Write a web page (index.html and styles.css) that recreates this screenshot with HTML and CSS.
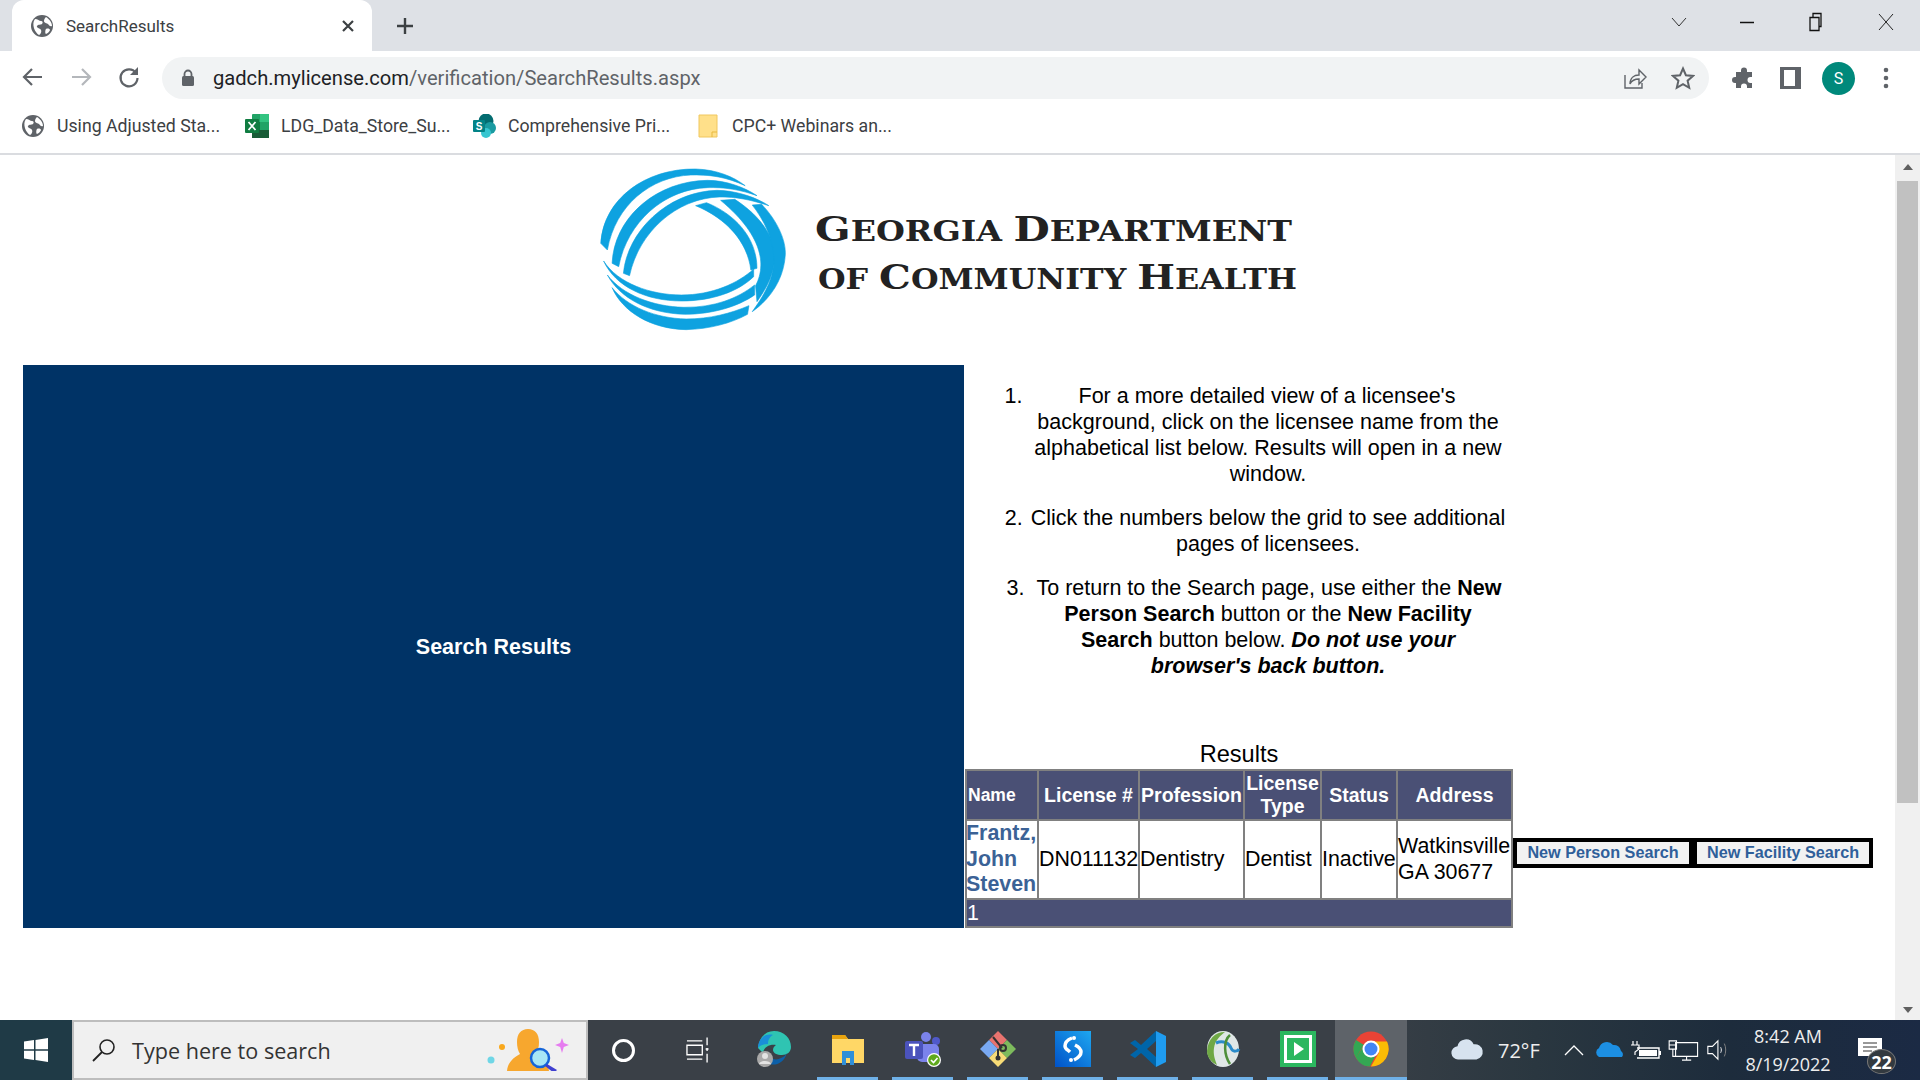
FILE: index.html
```html
<!DOCTYPE html>
<html lang="en">
<head>
<meta charset="utf-8">
<title>SearchResults</title>
<link rel="stylesheet" href="styles.css">
</head>
<body>
<div class="screen">
  <header class="tabstrip">
    <div class="tab">
      <svg class="ico22" viewBox="0 0 22 22"><circle cx="11" cy="11" r="11" fill="#5f6368"/><path d="M4 4c3 0 4 2 6 2s2 2 1 3-4 0-5 2 3 2 4 4-1 5-2 5C4 18 0 9 4 4zM15 2c3 2 6 5 6 9-2 1-3-1-4-2s-4-1-4-3 1-3 2-4zM15 14c2-1 4 0 4 1s-3 4-4 4-1-4 0-5z" fill="#fff"/></svg>
      <span class="tab-title">SearchResults</span>
      <svg class="tab-close" viewBox="0 0 14 14"><path d="M2 2l10 10M12 2L2 12" stroke="#3c4043" stroke-width="2.2" fill="none"/></svg>
    </div>
    <svg class="newtab" viewBox="0 0 20 20"><path d="M10 2v16M2 10h16" stroke="#3c4043" stroke-width="2.4" fill="none"/></svg>
    <div class="winctl">
      <svg class="chev" viewBox="0 0 16 10"><path d="M1 1l7 8 7-8" stroke="#333" stroke-width="1" fill="none"/></svg>
      <svg class="wbtn" viewBox="0 0 20 20"><path d="M3 10.500h14" stroke="#111" stroke-width="1.500"/></svg>
      <svg class="wbtn" viewBox="0 0 20 20"><path d="M5 5.500h9v13H5zM8 5.500V1.500h8v13h-2" stroke="#111" stroke-width="1.300" fill="none"/></svg>
      <svg class="wbtn" viewBox="0 0 20 20"><path d="M3 2l14 16M17 2L3 18" stroke="#222" stroke-width="1" fill="none"/></svg>
    </div>
  </header>

  <nav class="toolbar">
    <svg class="navbtn" viewBox="0 0 24 24"><path d="M21 12H4M11 4l-8 8 8 8" stroke="#5f6368" stroke-width="2.200" fill="none"/></svg>
    <svg class="navbtn" viewBox="0 0 24 24"><path d="M3 12h17M13 4l8 8-8 8" stroke="#b4b7bb" stroke-width="2.200" fill="none"/></svg>
    <svg class="navbtn" viewBox="0 0 24 24"><path d="M19 8a8.500 8.500 0 1 0 1.500 5" stroke="#5f6368" stroke-width="2.200" fill="none"/><path d="M21 2v8h-8z" fill="#5f6368"/></svg>
    <div class="omnibox">
      <svg class="lock" viewBox="0 0 14 18"><path d="M3.500 8V5a3.500 3.500 0 0 1 7 0v3" stroke="#5f6368" stroke-width="1.800" fill="none"/><rect x="1" y="7" width="12" height="10" rx="1.500" fill="#5f6368"/></svg>
      <span class="url"><span class="url-host">gadch.mylicense.com</span>/verification/SearchResults.aspx</span>
      <svg class="omni-share" viewBox="0 0 24 24"><path d="M2 9v13h17v-5M7 18c0-6 4-9 9-9V4l7 7-7 7v-5c-4 0-7 1-9 5z" stroke="#5f6368" stroke-width="1.400" fill="none"/></svg>
      <svg class="omni-star" viewBox="0 0 24 24"><path d="M12 2.500l2.900 6.700 7.100.7-5.400 4.800 1.600 7.100L12 18.100l-6.200 3.700 1.600-7.100L2 9.900l7.100-.7z" stroke="#5f6368" stroke-width="2" fill="none"/></svg>
    </div>
    <div class="toolbar-right">
      <svg class="tool" viewBox="0 0 24 24"><path d="M9 4.500a3 3 0 0 1 6 0V6h5v5h-1.500a3 3 0 0 0 0 6H20v5h-5v-1.500a3 3 0 0 0-6 0V22H4v-5H3a3 3 0 0 1 0-6h1V6h5z" fill="#5f6368"/></svg>
      <svg class="tool panel-ico" viewBox="0 0 21 22"><path d="M0 0h21v22H0zM4 3v16h11V3z" fill="#5f6368" fill-rule="evenodd"/></svg>
      <span class="avatar">S</span>
      <svg class="tool dots" viewBox="0 0 6 24"><circle cx="3" cy="4" r="2.300" fill="#5f6368"/><circle cx="3" cy="12" r="2.300" fill="#5f6368"/><circle cx="3" cy="20" r="2.300" fill="#5f6368"/></svg>
    </div>
  </nav>

  <div class="bookmarks">
    <a class="bm bm1">
      <svg class="ico22" viewBox="0 0 22 22"><circle cx="11" cy="11" r="11" fill="#5f6368"/><path d="M4 4c3 0 4 2 6 2s2 2 1 3-4 0-5 2 3 2 4 4-1 5-2 5C4 18 0 9 4 4zM15 2c3 2 6 5 6 9-2 1-3-1-4-2s-4-1-4-3 1-3 2-4zM15 14c2-1 4 0 4 1s-3 4-4 4-1-4 0-5z" fill="#fff"/></svg>
      <span>Using Adjusted Sta...</span>
    </a>
    <a class="bm bm2">
      <svg class="ico24" viewBox="0 0 24 24"><rect x="7" y="0" width="17" height="24" rx="1" fill="#21a366"/><rect x="15" y="0" width="9" height="8" fill="#33c481"/><rect x="7" y="16" width="17" height="8" fill="#185c37"/><rect x="7" y="8" width="8" height="8" fill="#107c41"/><rect x="0" y="5" width="14" height="14" rx="1" fill="#107c41"/><path d="M3.500 8l7 8M10.500 8l-7 8" stroke="#fff" stroke-width="1.800"/></svg>
      <span>LDG_Data_Store_Su...</span>
    </a>
    <a class="bm bm3">
      <svg class="ico24" viewBox="0 0 24 24"><circle cx="13" cy="7" r="7.500" fill="#036c70"/><circle cx="17" cy="14" r="6" fill="#1a9ba1"/><circle cx="13" cy="19" r="5" fill="#37c6d0"/><rect x="0" y="6" width="12" height="12" rx="1" fill="#038387"/><text class="sp-s" x="6" y="16">S</text></svg>
      <span>Comprehensive Pri...</span>
    </a>
    <a class="bm bm4">
      <svg class="ico20" viewBox="0 0 20 24"><path d="M1 1h11l7 0v22H1z" fill="#ffe08a" stroke="#f0c75e"/><path d="M14 23v-5h5" stroke="#e8b93f" fill="none"/></svg>
      <span>CPC+ Webinars an...</span>
    </a>
  </div>

  <div class="viewport">
    <main class="page">
      <div class="logo-row">
        <svg class="logo" viewBox="0 0 735 210">
          <g class="ring" transform="scale(0.4719 0.3333)">
            <path d="M44 265C50 130 140 40 245 42C290 44 325 65 350 92C310 65 270 58 235 60C150 65 75 150 58 285Z"/>
            <path d="M68 325C72 190 160 78 270 76C310 76 350 98 375 122C340 104 305 96 270 98C180 102 100 200 82 335Z"/>
            <path d="M92 355C100 230 185 110 290 106C330 106 375 128 400 152C365 136 330 124 295 126C205 130 125 230 105 362Z"/>
            <path d="M245 152L268 143C325 175 375 245 375 340L362 345C355 260 310 190 245 152Z"/>
            <path d="M298 136L328 133C385 185 418 255 412 320C408 365 395 400 375 440L372 392C392 340 395 250 298 136Z"/>
            <path d="M365 150L385 148C420 200 437 260 435 300C432 370 405 430 365 470C385 430 415 370 410 300C408 250 390 195 365 150Z"/>
            <path d="M50 318C80 385 150 420 215 420C280 420 335 385 368 342L368 365C335 410 280 438 215 438C140 438 75 395 50 318Z"/>
            <path d="M58 360C90 420 155 455 220 457C285 458 335 430 370 390L370 420C335 455 280 478 222 478C145 475 85 430 58 360Z"/>
            <path d="M68 398C100 455 160 490 225 492C275 492 320 475 358 452L355 478C320 505 275 522 225 524C150 522 90 470 68 398Z"/>
          </g>
          <text class="logo-text" x="235" y="86" textLength="477" lengthAdjust="spacingAndGlyphs"><tspan class="lc">G</tspan>EORGIA <tspan class="lc">D</tspan>EPARTMENT</text>
          <text class="logo-text" x="238" y="134" textLength="479" lengthAdjust="spacingAndGlyphs">OF <tspan class="lc">C</tspan>OMMUNITY <tspan class="lc">H</tspan>EALTH</text>
        </svg>
      </div>

      <div class="content">
        <section class="panel">Search Results</section>
        <section class="middle">
          <div class="steps">
            <p class="step step-first"><span class="num num-first">1.</span>For a more detailed view of a licensee's background, click on the licensee name from the alphabetical list below. Results will open in a new window.</p>
            <p class="step"><span class="num">2.</span>Click the numbers below the grid to see additional pages of licensees.</p>
            <p class="step step-third"><span class="num num-third">3.</span>To return to the Search page, use either the <b>New Person Search</b> button or the <b>New Facility Search</b> button below. <b><i>Do not use your browser's back button.</i></b></p>
          </div>
          <table class="grid">
            <caption>Results</caption>
            <thead>
              <tr class="head">
                <th class="c1 small">Name</th>
                <th class="c2">License #</th>
                <th class="c3">Profession</th>
                <th class="c4">License Type</th>
                <th class="c5">Status</th>
                <th class="c6">Address</th>
              </tr>
            </thead>
            <tbody>
              <tr class="row">
                <td><a class="name" href="#">Frantz, John Steven</a></td>
                <td>DN011132</td>
                <td>Dentistry</td>
                <td>Dentist</td>
                <td>Inactive</td>
                <td>Watkinsville<br>GA 30677</td>
              </tr>
              <tr class="pager"><td colspan="6">1</td></tr>
            </tbody>
          </table>
        </section>
        <div class="actions">
          <button class="btn btn1">New Person Search</button>
          <button class="btn btn2">New Facility Search</button>
        </div>
      </div>
    </main>
    <aside class="scrollbar">
      <span class="arrow-up"></span>
      <span class="thumb"></span>
      <span class="arrow-down"></span>
    </aside>
  </div>

  <footer class="taskbar">
    <div class="start">
      <svg class="winlogo" viewBox="0 0 24 24"><path d="M0 3.500l10-1.400v9.200H0zM11.500 1.900L24 0v11.300H11.500zM0 12.700h10v9.200L0 20.500zM11.500 12.700H24V24l-12.500-1.900z" fill="#fff"/></svg>
    </div>
    <div class="search">
      <svg class="mag" viewBox="0 0 24 24"><circle cx="15" cy="9" r="7" stroke="#222" stroke-width="1.600" fill="none"/><path d="M10 14L1 23" stroke="#222" stroke-width="1.800"/></svg>
      <span class="search-text">Type here to search</span>
      <svg class="searchart" viewBox="0 0 84 42">
        <circle cx="4" cy="31" r="3.500" fill="#6fd6e6"/><circle cx="15" cy="18" r="3" fill="#f9a81c"/>
        <path d="M75 9l1.800 5 5.200 2-5.200 2-1.800 6-1.800-6-5.200-2 5.200-2z" fill="#e67cf0"/>
        <path d="M20 42c1-10 8-14 13-17-2-3-3-7-3-12 0-8 4-13 11-13s11 5 11 13c0 5-1 9-3 12 6 3 12 7 13 17z" fill="#f7a72e"/>
        <circle cx="53" cy="29" r="9" fill="#a8e6f5" stroke="#1565d8" stroke-width="2.500"/>
        <path d="M60 35l10 6-3 3-9-7z" fill="#3f3fcf"/>
      </svg>
    </div>
    <div class="slot slot-cortana"><span class="cortana"></span></div>
    <div class="slot slot-task">
      <svg class="taskview" viewBox="0 0 24 28"><path d="M1 4.500h16M1 23.500h16M1 9h16v10H1zM22 1v8M22 12v3M22 18v9M20.500 13h3" stroke="#fff" stroke-width="1.400" fill="none"/></svg>
    </div>
    <div class="slot app noline">
      <svg class="appicon" viewBox="0 0 36 36"><path d="M3 17C4 7 10 0 19 0c10 0 17 7 17 16 0 5-4 8-9 8-5 0-9-2-9-5 0-3 2-4 3-5-5-1-12 1-13 8z" fill="#2fc4b2"/><path d="M3 17C3 8 10 2 18 4c-4 2-5 6-5 9C9 13 5 14 3 17z" fill="#1a8fd8"/><path d="M12 22c2 6 9 8 14 5 3-1 5-3 6-5-3 10-11 13-18 11z" fill="#0c5fa8"/><circle cx="10" cy="28" r="8" fill="#a9a9a9"/><circle cx="10" cy="25" r="3" fill="#e3e3e3"/><path d="M4 33c1-4 11-4 12 0z" fill="#e3e3e3"/></svg>
    </div>
    <div class="slot app">
      <svg class="appicon" viewBox="0 0 36 36"><path d="M2 4h13l3 4h16v24H2z" fill="#ffd766"/><path d="M2 4h13l3 4H2z" fill="#e8a30e"/><path d="M12 34V20h12v14h-4v-7h-4v7z" fill="#2f8fd8"/></svg>
    </div>
    <div class="slot app">
      <svg class="appicon" viewBox="0 0 36 36"><circle cx="21" cy="6" r="5" fill="#7b83eb"/><circle cx="31" cy="10" r="4" fill="#5059c9"/><rect x="12" y="13" width="22" height="18" rx="5" fill="#7b83eb"/><rect x="0" y="10" width="18" height="18" rx="2" fill="#4b53bc"/><path d="M4 14h10M9 14v11" stroke="#fff" stroke-width="2.400"/><circle cx="29" cy="29" r="7" fill="#fff"/><circle cx="29" cy="29" r="5.800" fill="#5fa91d"/><path d="M26 29l2.500 2.500 4-4.500" stroke="#fff" stroke-width="1.600" fill="none"/></svg>
    </div>
    <div class="slot app">
      <svg class="appicon" viewBox="0 0 36 36"><path d="M18 0l9 9-9 9-9-9z" fill="#e8736f"/><path d="M27 9l9 9-9 9-9-9z" fill="#7dbb5d"/><path d="M9 9l9 9-9 9-9-9z" fill="#79a9f2"/><path d="M18 18l9 9-9 9-9-9z" fill="#f7dc77"/><path d="M13 6l9 11M18 18v9" stroke="#333" stroke-width="2" fill="none"/><circle cx="18" cy="27" r="2.500" fill="#333"/><circle cx="23" cy="17" r="3" fill="none" stroke="#333" stroke-width="2"/></svg>
    </div>
    <div class="slot app">
      <svg class="appicon" viewBox="0 0 36 36"><defs><linearGradient id="sg" x1="0" y1="1" x2="1" y2="0"><stop offset="0" stop-color="#0052c8"/><stop offset="1" stop-color="#1ea7f0"/></linearGradient></defs><rect width="36" height="36" fill="url(#sg)"/><path d="M17 7c-5 2-7 5-7 8 0 3 3 4 5 6M20 14c4 2 6 4 6 7 0 3-3 6-7 8" stroke="#fff" stroke-width="3.500" fill="none"/><circle cx="19" cy="7" r="2" fill="#fff"/><circle cx="16" cy="29" r="2" fill="#fff"/></svg>
    </div>
    <div class="slot app vs">
      <svg class="appicon" viewBox="0 0 36 36"><path d="M26 0v36L11 22l-6 5-5-3 8-6-8-6 5-3 6 5z" fill="#0065a9"/><path d="M26 10v16l-9-8z" fill="#3a4047"/><path d="M26 0l10 5v26l-10 5z" fill="#1f9cf0"/></svg>
    </div>
    <div class="slot app">
      <svg class="appicon" viewBox="0 0 36 36"><ellipse cx="18" cy="18" rx="16" ry="18" fill="#dfe7e6"/><path d="M2 20C3 8 10 1 20 1c-4 3-10 8-11 16-1 6 1 12 3 17C6 31 2 26 2 20z" fill="#6fa845"/><path d="M11 12c7-3 13 0 15 5s7 3 8 1" stroke="#2a8bc9" stroke-width="3" fill="none"/><path d="M25 4c-7 6-6 20 0 29" stroke="#4d8f3a" stroke-width="2.500" fill="none"/></svg>
    </div>
    <div class="slot app">
      <svg class="appicon" viewBox="0 0 36 36"><rect width="36" height="36" fill="#2bb75f"/><rect x="4" y="4" width="28" height="28" fill="#fff"/><rect x="7" y="7" width="22" height="22" fill="#2bb75f"/><path d="M14 11l10 7-10 7z" fill="#fff"/></svg>
    </div>
    <div class="slot app active">
      <svg class="appicon" viewBox="0 0 36 36"><circle cx="18" cy="18" r="17.500" fill="#ea4335"/><path d="M3 27l8-14 7 5 8 0-9 17.500C11 35.500 6 32 3 27zM3 9a17.500 17.500 0 0 0 0 18l8-13z" fill="#34a853"/><path d="M18 10.500h16a17.500 17.500 0 0 1-16 25l8-14z" fill="#fbbc05"/><circle cx="18" cy="18" r="8.500" fill="#fff"/><circle cx="18" cy="18" r="6.500" fill="#4285f4"/></svg>
    </div>
    <div class="tray">
      <svg class="cloud" viewBox="0 0 36 24"><path d="M9 22a7 7 0 0 1-1-14 9 9 0 0 1 17-2 8 8 0 0 1 3 16z" fill="#d7e3ef"/></svg>
      <span class="temp">72°F</span>
      <svg class="t t-chev" viewBox="0 0 36 20"><path d="M9 15l9-9 9 9" stroke="#fff" stroke-width="1.300" fill="none"/></svg>
      <svg class="t" viewBox="0 0 36 20"><path d="M7 17a5 5 0 0 1 0-9 8 8 0 0 1 14-3 7 7 0 0 1 8 6 4 4 0 0 1 1 6z" fill="#1c8fe3"/></svg>
      <svg class="t" viewBox="0 0 36 20"><path d="M5 1v4M9 1v4M3 5h8v4l-4 3v3" stroke="#fff" stroke-width="1.200" fill="none"/><path d="M9 8h22v10H9" stroke="#fff" stroke-width="1.400" fill="none"/><rect x="11" y="10" width="18" height="6" fill="#fff"/><rect x="31" y="11" width="2" height="4" fill="#fff"/></svg>
      <svg class="t" viewBox="0 0 36 24"><path d="M11 4h24v15H11zM4 2h8v9H4zM4 6.500h8M8 11v8h10M23 19v4M18 23h10" stroke="#fff" stroke-width="1.200" fill="none"/></svg>
      <svg class="t t-vol" viewBox="0 0 24 24"><path d="M2 8h5l6-6v20l-6-6H2z" stroke="#fff" stroke-width="1.200" fill="none"/><path d="M16 9c1 2 1 4 0 6" stroke="#fff" fill="none"/><path d="M20 5c2 4 2 10 0 14" stroke="#888" fill="none"/></svg>
      <div class="clock"><span>8:42 AM</span><span>8/19/2022</span></div>
      <div class="notif">
        <svg class="note" viewBox="0 0 24 20"><path d="M0 0h24v18H0z" fill="#fff"/><path d="M5 5h14M5 9h14M5 13h9" stroke="#333"/></svg>
        <span class="badge">22</span>
      </div>
    </div>
  </footer>
</div>
</body>
</html>
```

FILE: styles.css
```css
* { box-sizing: border-box; }
html, body { margin: 0; height: 100%; overflow: hidden; background: #fff; }
.screen { width: 1920px; height: 1080px; display: flex; flex-direction: column; font-family: "Liberation Sans", Arial, sans-serif; }

/* tab strip */
.tabstrip { height: 51px; background: #dee1e6; display: flex; align-items: center; flex: none; }
.tab { margin-left: 12px; width: 360px; height: 51px; background: #fff; border-radius: 12px 12px 0 0; display: flex; align-items: center; padding-left: 19px; position: relative; align-self: flex-end; }
.ico22 { width: 22px; height: 22px; flex: none; }
.ico24 { width: 24px; height: 24px; flex: none; }
.ico20 { width: 20px; height: 24px; flex: none; }
.tab-title { margin-left: 13px; font: 17px Roboto, sans-serif; color: #3c4043; }
.tab-close { width: 14px; height: 14px; margin-left: auto; margin-right: 17px; }
.newtab { width: 20px; height: 20px; margin-left: 23px; }
.winctl { margin-left: auto; display: flex; align-items: center; }
.chev { width: 16px; height: 10px; margin-right: 50px; margin-top: -8px; }
.wbtn { width: 20px; height: 20px; margin-right: 48px; margin-top: -8px; }
.wbtn:nth-child(3) { margin-right: 51px; }
.wbtn:last-child { margin-right: 24px; }

/* toolbar */
.toolbar { height: 51px; background: #fff; display: flex; align-items: center; flex: none; padding-left: 21px; }
.navbtn { width: 24px; height: 24px; margin-right: 24px; flex: none; }
.navbtn:nth-child(3) { margin-right: 21px; }
.omnibox { width: 1547px; height: 42px; margin-top: 3px; background: #f1f3f4; border-radius: 21px; display: flex; align-items: center; padding-left: 19px; flex: none; }
.lock { width: 14px; height: 18px; flex: none; }
.url { margin-left: 18px; font: 20.15px Roboto, sans-serif; color: #5f6368; white-space: nowrap; }
.url-host { color: #202124; }
.omni-share { width: 24px; height: 24px; margin-left: auto; }
.omni-star { width: 24px; height: 24px; margin-left: 24px; margin-right: 14px; }
.toolbar-right { display: flex; align-items: center; margin-left: 23px; margin-top: 3px; }
.tool { width: 24px; height: 24px; flex: none; }
.tool.panel-ico { width: 21px; height: 22px; margin-left: 24px; }
.avatar { width: 33px; height: 33px; border-radius: 50%; background: #00897b; color: #fff; margin-left: 21px; display: flex; align-items: center; justify-content: center; font: 16px Roboto, sans-serif; }
.tool.dots { width: 6px; margin-left: 28px; }

/* bookmarks */
.bookmarks { height: 53px; flex: none; background: #fff; border-bottom: 2px solid #dadce0; display: flex; align-items: center; padding-left: 22px; padding-bottom: 3px; }
.bm { display: flex; align-items: center; font: 17.7px Roboto, sans-serif; color: #3c4043; white-space: nowrap; }
.bm1 { width: 223px; gap: 13px; }
.bm2 { width: 228px; gap: 12px; }
.bm3 { width: 225px; gap: 11px; }
.bm4 { gap: 14px; }
.sp-s { font: bold 10px "Liberation Sans", sans-serif; fill: #fff; text-anchor: middle; }

/* page */
.viewport { flex: 1; display: flex; min-height: 0; }
.page { flex: 1; min-width: 0; background: #fff; }
.scrollbar { width: 25px; background: #f0f0f0; display: flex; flex-direction: column; align-items: center; flex: none; position: relative; }
.arrow-up { width: 0; height: 0; border: 5px solid transparent; border-bottom: 6px solid #606060; border-top: 0; margin-top: 9px; }
.thumb { width: 21px; height: 622px; background: #c1c1c1; margin-top: 11px; }
.arrow-down { width: 0; height: 0; border: 5px solid transparent; border-top: 6px solid #606060; border-bottom: 0; margin-top: auto; margin-bottom: 7px; }

.logo-row { height: 210px; display: flex; justify-content: center; }
.logo { width: 735px; height: 210px; display: block; }
.ring path { fill: #0ea2e0; stroke: #0ea2e0; stroke-width: 1.5; }
.logo-text { font: bold 27px "DejaVu Serif", serif; fill: #222; }
.lc { font-size: 34px; }

.content { display: flex; padding-left: 23px; height: 563px; }
.panel { width: 941px; height: 563px; background: #003366; color: #fff; font-weight: bold; font-size: 21.5px; display: flex; align-items: center; justify-content: center; flex: none; padding-top: 2px; }
.middle { width: 549px; flex: none; display: flex; flex-direction: column; }
.steps { padding: 18px 6px 0 65px; height: 378px; }
.step { margin: 0 0 18px; text-align: center; font-size: 21.5px; line-height: 26px; text-indent: -26px; }
.step-first { text-indent: -76px; }
.step-third { text-indent: -28px; }
.num { display: inline-block; width: 26px; text-indent: 0; text-align: left; }
.num-first { width: 74px; }
.num-third { width: 30px; }

.grid { border-collapse: collapse; table-layout: fixed; width: 546px; margin-left: 1px; font-size: 21.4px; }
.grid caption { font-size: 23.6px; line-height: 26px; height: 28px; text-align: center; }
.grid th, .grid td { border: 2px solid #808080; padding: 0 1px; }
.grid th { background: #4a5075; color: #fff; font-weight: bold; font-size: 19.5px; line-height: 23px; text-align: center; height: 50px; }
.grid th.small { font-size: 17.5px; text-align: left; }
.c1 { width: 72px; }
.c2 { width: 101px; }
.c3 { width: 105px; }
.c4 { width: 77px; }
.c5 { width: 76px; }
.c6 { width: 115px; }
.grid .row td { line-height: 25.5px; height: 79px; white-space: nowrap; padding: 0; }
.name { color: #3b6296; font-weight: bold; text-decoration: none; white-space: normal; display: block; margin-left: -1px; }
.grid .pager td { background: #4a5075; color: #fff; height: 28px; line-height: 24px; padding: 0; }

.actions { display: flex; align-self: flex-start; margin-top: 473px; }
.btn { height: 30px; border: 4px solid #000; background: #f2f2f2; color: #2f5f9a; font: bold 16.2px "Liberation Sans", sans-serif; padding: 0 0 2px; }
.btn1 { width: 180px; }
.btn2 { width: 180px; }

/* taskbar */
.taskbar { height: 60px; flex: none; display: flex; background: linear-gradient(90deg, #1f3a46 0, #1f3a46 4%, #3a4047 5%, #3a4047 70%, #2a3740 80%, #1d2c3c 90%, #1b2a44 100%); }
.start { width: 72px; display: flex; align-items: center; justify-content: center; flex: none; }
.winlogo { width: 24px; height: 24px; }
.search { width: 516px; flex: none; background: #f0f0f0; border: 2px solid #bdbdbd; display: flex; align-items: center; padding-left: 18px; position: relative; }
.mag { width: 24px; height: 24px; flex: none; }
.search-text { margin-left: 16px; padding-top: 1px; font: 21.6px "Open Sans", sans-serif; color: #333; }
.searchart { width: 84px; height: 42px; margin-left: auto; margin-right: 15px; }
.slot { height: 60px; display: flex; align-items: center; justify-content: center; flex: none; position: relative; }
.slot-cortana { width: 71px; }
.slot-task { width: 76px; }
.cortana { width: 23px; height: 23px; border: 3px solid #fff; border-radius: 50%; }
.taskview { width: 23px; height: 28px; }
.app { width: 75px; }
.app.active { width: 72px; background: #5e6369; }
.appicon { width: 36px; height: 36px; margin-top: -3px; }
.app::after { content: ""; position: absolute; left: 7px; right: 7px; bottom: 0; height: 3px; background: #6fb1e8; }
.app.active::after { left: 0; right: 0; }
.app.noline::after { display: none; }
.tray { flex: 1; display: flex; align-items: center; padding-left: 43px; color: #fff; }
.cloud { width: 34px; height: 24px; flex: none; }
.temp { width: 72px; padding-left: 14px; font: 20px "Open Sans", sans-serif; color: #eee; flex: none; }
.t { width: 36px; height: 22px; flex: none; }
.t-vol { width: 34px; }
.clock { width: 108px; display: flex; flex-direction: column; align-items: center; font: 18px "Open Sans", sans-serif; line-height: 28px; flex: none; color: #eee; }
.notif { width: 56px; height: 60px; position: relative; flex: none; }
.note { position: absolute; left: 16px; top: 18px; width: 24px; height: 20px; }
.badge { position: absolute; left: 25px; top: 29px; width: 29px; height: 25px; border-radius: 50%; background: #333a40; border: 1px solid #777; color: #fff; font: bold 18px "Open Sans", sans-serif; display: flex; align-items: center; justify-content: center; }
```
